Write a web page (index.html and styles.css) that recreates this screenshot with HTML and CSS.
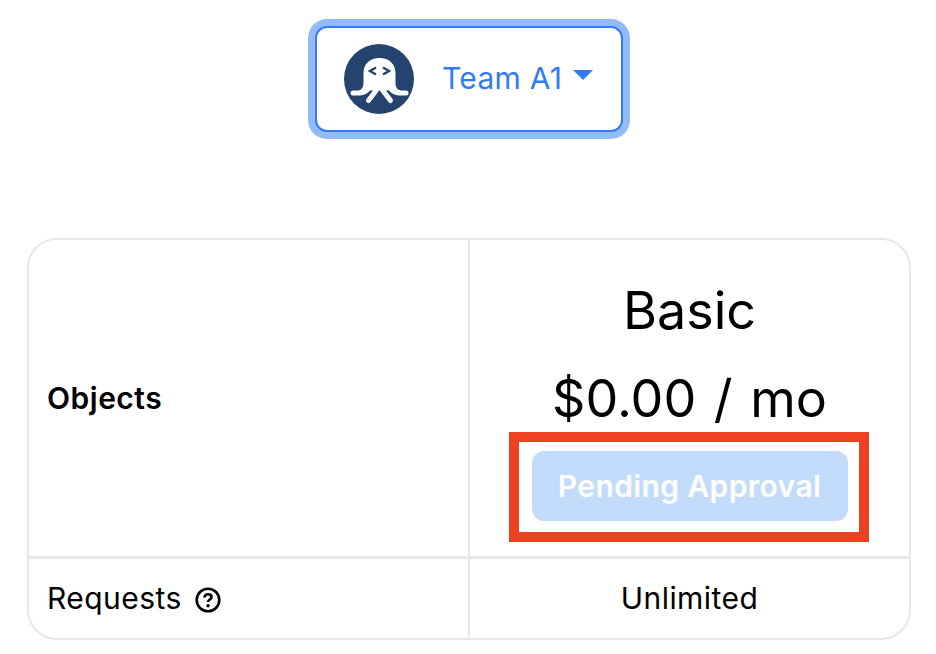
FILE: index.html
```html
<!DOCTYPE html>
<html lang="en">
<head>
<meta charset="utf-8">
<title>Plans</title>
<link rel="stylesheet" href="styles.css">
</head>
<body>
<header class="header">
  <button class="team-button" type="button">
    <svg class="avatar" viewBox="0 0 70 70" aria-hidden="true">
      <circle cx="35" cy="35" r="35" fill="#25436f"/>
      <path d="M19.500 29C19.500 20 26 14 35.500 14S51.500 20 51.500 29V39C51.500 44 54 46.500 58 46.500H62A2.500 2.500 0 0 1 62 51.500H57C52 51.500 47 49.500 45 46.500H26C24 49.500 19 51.500 14 51.500H9A2.500 2.500 0 0 1 9 46.500H13C17 46.500 19.500 44 19.500 39Z" fill="#fff"/>
      <path d="M24.500 56.500L32.500 46M46.500 56.500L38.500 46" fill="none" stroke="#fff" stroke-width="5" stroke-linecap="round"/>
      <path d="M32 23.500L26 27L32 30.500M39 23.500L45 27L39 30.500" fill="none" stroke="#25436f" stroke-width="2.400"/>
    </svg>
    <span class="team-name">Team A1</span>
    <span class="caret"></span>
  </button>
</header>
<main class="plan-table">
  <div class="cell feature-cell feature-title">Objects</div>
  <div class="cell plan-cell">
    <div class="plan-name">Basic</div>
    <div class="plan-price">$0.00 / mo</div>
    <div class="action">
      <button class="pending" type="button" disabled>Pending Approval</button>
      <div class="highlight"></div>
    </div>
  </div>
  <div class="cell feature-cell row-two">
    <span>Requests</span>
    <svg class="help" viewBox="0 0 26 26" aria-hidden="true">
      <circle cx="13" cy="13" r="11.300" fill="none" stroke="#000" stroke-width="2.600"/>
      <path d="M9.500 10.500C9.500 8.500 11 7.300 13 7.300C15 7.300 16.500 8.500 16.500 10.200C16.500 12.500 13 12.600 13 15" fill="none" stroke="#000" stroke-width="2.600"/>
      <circle cx="13" cy="18.700" r="1.700" fill="#000"/>
    </svg>
  </div>
  <div class="cell value-cell row-two">Unlimited</div>
</main>
</body>
</html>
```
FILE: styles.css
```css
* { box-sizing: border-box; }

html, body { margin: 0; padding: 0; }

body {
  width: 936px;
  height: 654px;
  overflow: hidden;
  background: #fff;
  color: #000;
  font-family: Inter, "Liberation Sans", sans-serif;
}

.header {
  display: flex;
  justify-content: center;
  padding: 26px 0 0 2px;
  height: 238px;
}

.team-button {
  display: flex;
  align-items: center;
  width: 308px;
  height: 106px;
  padding: 0 0 0 27px;
  background: #fff;
  border: 2px solid #2f7cf6;
  border-radius: 12px;
  box-shadow: 0 0 0 7px #93bbfb;
  font: inherit;
  color: #2f7cf6;
}

.avatar {
  width: 70px;
  height: 70px;
  flex: none;
}

.team-name {
  margin: 0 0 2px 28px;
  font-size: 30px;
  line-height: 36px;
  letter-spacing: 0.3px;
}

.caret {
  width: 0;
  height: 0;
  margin: 0 0 9px 11px;
  border-left: 10.5px solid transparent;
  border-right: 10.5px solid transparent;
  border-top: 10.5px solid #2f7cf6;
}

.plan-table {
  display: grid;
  grid-template-columns: 441px 1fr;
  grid-template-rows: 319px 1fr;
  width: 884px;
  height: 402px;
  margin-left: 27px;
  border: 2px solid #e7e7e7;
  border-radius: 30px;
}

.cell { min-width: 0; }

.feature-cell {
  display: flex;
  align-items: center;
  padding-left: 18px;
  border-right: 2px solid #e7e7e7;
}

.feature-title {
  font-size: 30px;
  font-weight: 600;
  letter-spacing: 0.5px;
  border-bottom: 3px solid #e7e7e7;
}

.plan-cell {
  display: flex;
  flex-direction: column;
  align-items: center;
  padding-top: 41px;
  border-bottom: 3px solid #e7e7e7;
}

.plan-name,
.plan-price {
  font-size: 52px;
  line-height: 60px;
}

.plan-price {
  margin-top: 28px;
  word-spacing: 3px;
}

.action {
  position: relative;
  margin-top: 22px;
}

.pending {
  display: block;
  width: 316px;
  height: 70px;
  border: 0;
  border-radius: 12px;
  background: #c4dcfb;
  color: #fff;
  font: 600 30px/36px Inter, "Liberation Sans", sans-serif;
  letter-spacing: 0.4px;
  opacity: 1;
}

.highlight {
  position: absolute;
  inset: -19px -21px -21px -23px;
  border: 10px solid #ef4023;
}

.row-two {
  padding-bottom: 2px;
  font-size: 30px;
  line-height: 36px;
  letter-spacing: 0.45px;
}

.help {
  width: 26px;
  height: 26px;
  margin: 4px 0 0 13px;
}

.value-cell {
  display: flex;
  align-items: center;
  justify-content: center;
}
```
